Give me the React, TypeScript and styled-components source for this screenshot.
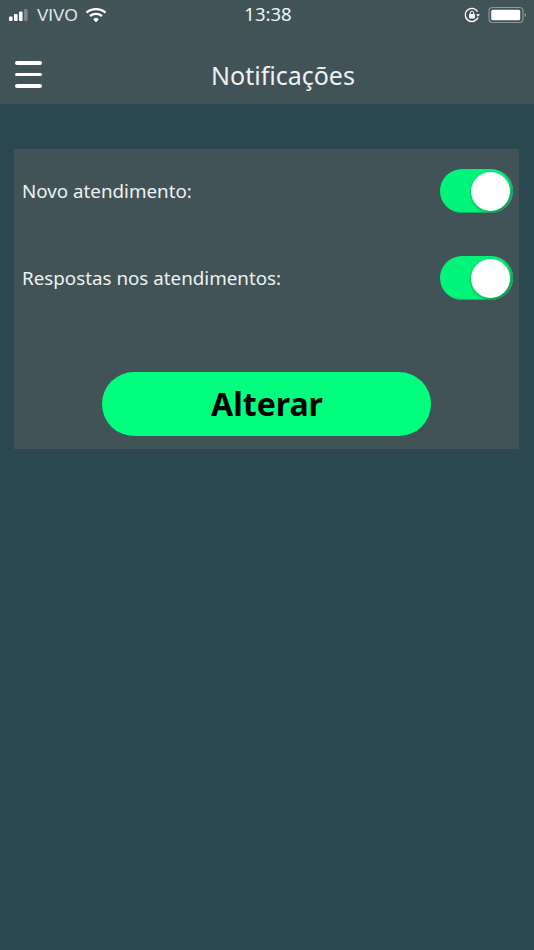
import React, { FC } from 'react';
import styled, { createGlobalStyle } from 'styled-components';

const GlobalStyle = createGlobalStyle`
  html, body {
    margin: 0;
    padding: 0;
    background: #2b474f;
  }
  * {
    box-sizing: border-box;
  }
`;

const SignalBars: FC = () => (
  <svg width="24" height="14" viewBox="0 0 24 14">
    <rect x="1" y="8.5" width="3.6" height="4.5" rx="1" fill="#fff" />
    <rect x="6" y="6" width="3.6" height="7" rx="1" fill="#fff" />
    <rect x="11" y="3.5" width="3.6" height="9.5" rx="1" fill="#fff" />
    <rect x="16" y="1" width="3.6" height="12" rx="1" fill="#7b888b" />
  </svg>
);

const WifiIcon: FC = () => (
  <svg width="22" height="16" viewBox="0 0 22 16" fill="none">
    <path d="M1.5 5.6C6.8 1 15.2 1 20.5 5.6" stroke="#fff" strokeWidth="2.3" />
    <path d="M5 9C8.4 6.2 13.6 6.2 17 9" stroke="#fff" strokeWidth="2.3" />
    <path d="M8.6 12.2C10 11 12 11 13.4 12.2L11 15Z" fill="#fff" stroke="#fff" strokeWidth="0.8" />
  </svg>
);

const RotationLock: FC = () => (
  <svg width="18" height="18" viewBox="0 0 18 18" fill="none">
    <path d="M15 11.5A6.6 6.6 0 1 1 14.6 5.6" stroke="#fff" strokeWidth="1.4" />
    <path d="M13 8.2H17L15 10.8Z" fill="#fff" />
    <rect x="6" y="8" width="6" height="4.6" rx="0.8" fill="#fff" />
    <path d="M7.3 8V6.8A1.7 1.7 0 0 1 10.7 6.8V8" stroke="#fff" strokeWidth="1" />
  </svg>
);

const BatteryIcon: FC = () => (
  <svg width="40" height="18" viewBox="0 0 40 18" fill="none">
    <rect x="1" y="1.5" width="34" height="15" rx="3.5" stroke="#8a9699" strokeWidth="1.2" />
    <rect x="3.2" y="3.7" width="29" height="10.6" rx="1.5" fill="#fff" />
    <path d="M36.6 7V11C37.6 10.8 38.2 10 38.2 9C38.2 8 37.6 7.2 36.6 7Z" fill="#8a9699" />
  </svg>
);

const Toggle: FC = () => (
  <ToggleTrack role="switch" aria-checked="true">
    <ToggleKnob />
  </ToggleTrack>
);

const App: FC = () => (
  <Page>
    <GlobalStyle />
    <Header>
      <StatusBar>
        <StatusGroup>
          <SignalBars />
          <Carrier>VIVO</Carrier>
          <WifiSlot>
            <WifiIcon />
          </WifiSlot>
        </StatusGroup>
        <Clock>13:38</Clock>
        <StatusGroupRight>
          <RotationLock />
          <BatteryIcon />
        </StatusGroupRight>
      </StatusBar>
      <NavBar>
        <MenuButton aria-label="Menu">
          <MenuLine />
          <MenuLine />
          <MenuLine />
        </MenuButton>
        <Title>Notificações</Title>
      </NavBar>
    </Header>
    <Card>
      <Row>
        <RowLabel>Novo atendimento:</RowLabel>
        <Toggle />
      </Row>
      <Row>
        <RowLabel>Respostas nos atendimentos:</RowLabel>
        <Toggle />
      </Row>
      <SubmitButton>Alterar</SubmitButton>
    </Card>
  </Page>
);

export default App;

const Page = styled.div`
  width: 534px;
  height: 950px;
  overflow: hidden;
  background: #2b474f;
  font-family: "Noto Sans", "Open Sans", sans-serif;
  color: #fff;
`;

const Header = styled.header`
  height: 104px;
  background: #425357;
`;

const StatusBar = styled.div`
  height: 30px;
  display: grid;
  grid-template-columns: 1fr auto 1fr;
  align-items: center;
  padding: 0 6px 0 8px;
`;

const StatusGroup = styled.div`
  display: flex;
  align-items: center;
`;

const StatusGroupRight = styled(StatusGroup)`
  justify-content: flex-end;
  gap: 7px;
`;

const Carrier = styled.span`
  margin: 2px 0 0 5px;
  font-family: "Liberation Sans", sans-serif;
  font-size: 17px;
  color: #e4e8e9;
`;

const WifiSlot = styled.span`
  display: flex;
  margin-left: 7px;
`;

const Clock = styled.span`
  margin-bottom: 3px;
  font-family: "Noto Sans", sans-serif;
  font-size: 18.5px;
  color: #f2f4f4;
`;

const NavBar = styled.div`
  position: relative;
  height: 74px;
  padding-top: 15px;
  display: flex;
  align-items: center;
  justify-content: center;
`;

const MenuButton = styled.div`
  position: absolute;
  left: 15px;
  top: 31px;
  width: 27px;
  display: flex;
  flex-direction: column;
  gap: 8px;
`;

const MenuLine = styled.span`
  display: block;
  height: 3.5px;
  border-radius: 2px;
  background: #fff;
`;

const Title = styled.h1`
  margin: 0 0 0 32px;
  font-size: 25px;
  font-weight: 400;
  color: #eef1f1;
`;

const Card = styled.section`
  margin: 45px 15px 0 14px;
  height: 300px;
  padding: 20px 6px 0 8px;
  background: #425357;
  display: flex;
  flex-direction: column;
`;

const Row = styled.div`
  height: 44px;
  margin-bottom: 43px;
  display: flex;
  align-items: center;
  justify-content: space-between;
`;

const RowLabel = styled.span`
  font-size: 18.8px;
  color: #eef1f1;
`;

const ToggleTrack = styled.div`
  width: 73px;
  height: 44px;
  border-radius: 22px;
  background: #00f57a;
  box-shadow: inset -2px -1px 1px #26a566;
  display: flex;
  align-items: center;
  justify-content: flex-end;
  padding-right: 3px;
`;

const ToggleKnob = styled.div`
  width: 39px;
  height: 39px;
  border-radius: 50%;
  background: #fff;
  box-shadow: 0 1px 3px rgba(0, 60, 30, 0.45);
`;

const SubmitButton = styled.button`
  align-self: center;
  width: 329px;
  height: 64px;
  margin: 29px 0 0 -3px;
  padding: 0 0 2px 2px;
  border: none;
  border-radius: 32px;
  background: #00ff7f;
  color: #000;
  font-family: "Noto Sans", "Open Sans", sans-serif;
  font-size: 32px;
  font-weight: 700;
`;
